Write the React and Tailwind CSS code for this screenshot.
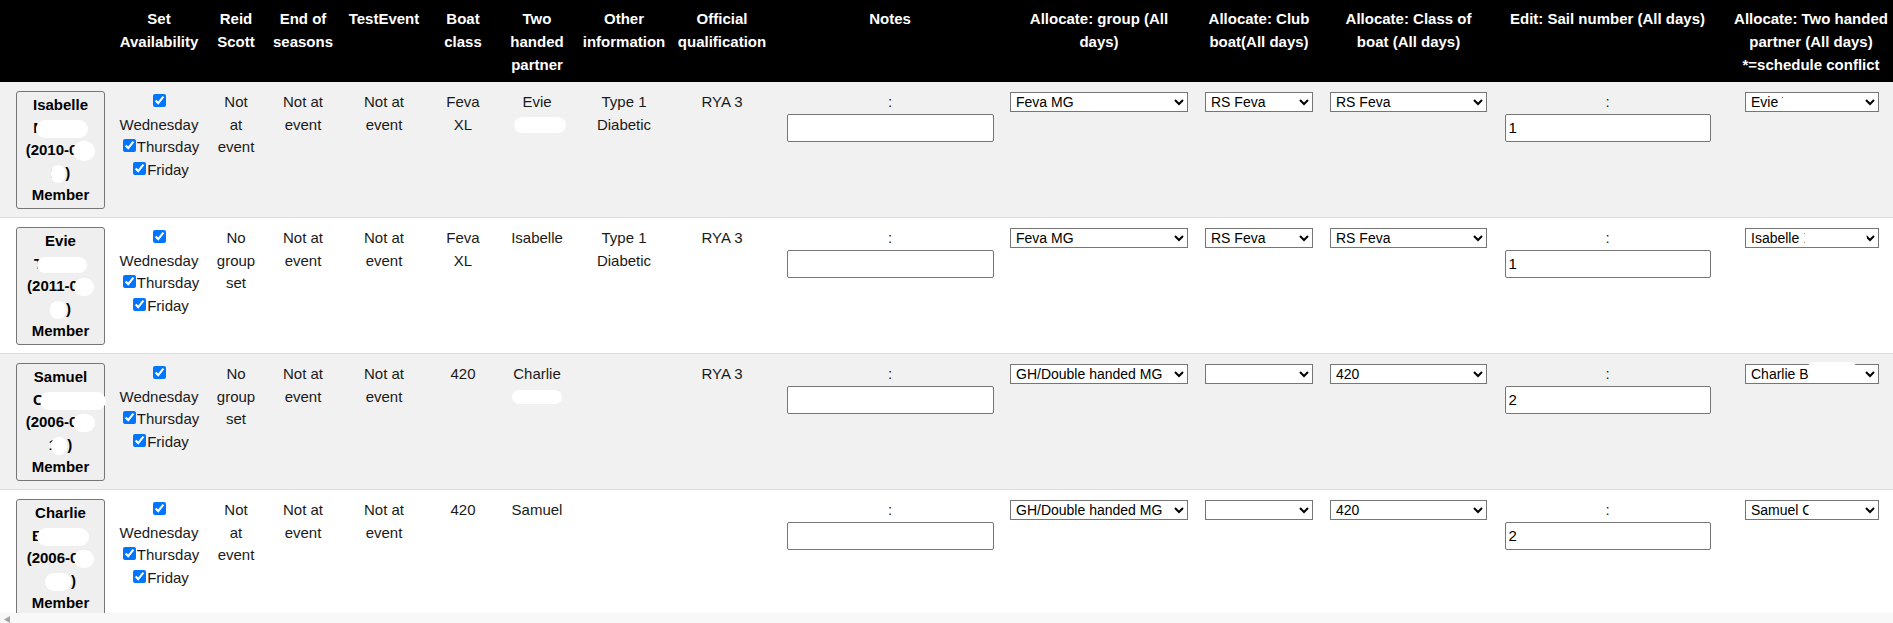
import React from "react";

const Blob = ({ className = "" }) => (
  <span className={`inline-block bg-white rounded-full align-middle ${className}`} />
);

const rows = [
  {
    name: [
      "Isabelle",
      <><span>M</span><Blob className="w-[52px] h-[18px] -ml-[10px]" /></>,
      <><span>(2010-0</span><Blob className="w-[22px] h-[20px] -ml-[4px]" /></>,
      <><span>2</span><Blob className="w-[14px] h-[18px] -ml-[8px]" /><span>)</span></>,
      "Member",
    ],
    reid: ["Not", "at", "event"],
    boat: ["Feva", "XL"],
    partner: "Evie",
    partnerBlob: "w-[52px] h-[16px] ml-[6px]",
    other: ["Type 1", "Diabetic"],
    qual: "RYA 3",
    group: "Feva MG",
    club: "RS Feva",
    cls: "RS Feva",
    sail: "1",
    mate: "Evie T",
    mateBlob: "left-[36px] top-[3px] w-[40px] h-[14px]",
  },
  {
    name: [
      "Evie",
      <><span>T</span><Blob className="w-[50px] h-[16px] -ml-[6px]" /></>,
      <><span>(2011-0</span><Blob className="w-[20px] h-[18px] -ml-[4px]" /></>,
      <><Blob className="w-[16px] h-[18px]" /><span>)</span></>,
      "Member",
    ],
    reid: ["No", "group", "set"],
    boat: ["Feva", "XL"],
    partner: "Isabelle",
    partnerBlob: "w-[30px] h-[10px]",
    other: ["Type 1", "Diabetic"],
    qual: "RYA 3",
    group: "Feva MG",
    club: "RS Feva",
    cls: "RS Feva",
    sail: "1",
    mate: "Isabelle M",
    mateBlob: "left-[58px] top-[3px] w-[64px] h-[14px]",
  },
  {
    name: [
      "Samuel",
      <><span>C</span><Blob className="w-[66px] h-[18px] -ml-[4px] mr-[-18px]" /></>,
      <><span>(2006-0</span><Blob className="w-[22px] h-[18px] -ml-[4px]" /></>,
      <><span>1</span><Blob className="w-[16px] h-[18px] -ml-[6px]" /><span>)</span></>,
      "Member",
    ],
    reid: ["No", "group", "set"],
    boat: ["420"],
    partner: "Charlie",
    partnerBlob: "w-[50px] h-[14px]",
    other: [],
    qual: "RYA 3",
    group: "GH/Double handed MG",
    club: "",
    cls: "420",
    sail: "2",
    mate: "Charlie B",
    mateBlob: "left-[62px] top-[-2px] w-[50px] h-[16px]",
  },
  {
    name: [
      "Charlie",
      <><span>B</span><Blob className="w-[52px] h-[18px] -ml-[6px]" /></>,
      <><span>(2006-0</span><Blob className="w-[20px] h-[18px] -ml-[4px]" /></>,
      <><Blob className="w-[26px] h-[18px]" /><span>)</span></>,
      "Member",
    ],
    reid: ["Not", "at", "event"],
    boat: ["420"],
    partner: "Samuel",
    partnerBlob: "w-[30px] h-[10px]",
    other: [],
    qual: "",
    group: "GH/Double handed MG",
    club: "",
    cls: "420",
    sail: "2",
    mate: "Samuel C",
    mateBlob: "left-[62px] top-[3px] w-[36px] h-[14px]",
  },
];

const Lines = ({ items }) => items.map((t, i) => <div key={i}>{t}</div>);

const Check = () => (
  <input type="checkbox" defaultChecked className="w-[13px] h-[13px] ml-[4px] mr-[1px] align-baseline" />
);

const Select = ({ value, width }) => (
  <select
    defaultValue={value}
    className={`block mx-auto mt-[1px] h-[20px] ${width} border border-[#767676] bg-white text-[14px] leading-[18px] text-black pl-[1px]`}
  >
    <option value={value}>{value}</option>
  </select>
);

const TextInput = ({ value, width }) => (
  <input
    type="text"
    defaultValue={value}
    className={`block mx-auto ${width} h-[28px] border border-[#767676] rounded-[2px] bg-white text-[15px] text-black pl-[3px]`}
  />
);

const heads = [
  [],
  ["Set", "Availability"],
  ["Reid", "Scott"],
  ["End of", "seasons"],
  ["TestEvent"],
  ["Boat", "class"],
  ["Two", "handed", "partner"],
  ["Other", "information"],
  ["Official", "qualification"],
  ["Notes"],
  ["Allocate: group (All", "days)"],
  ["Allocate: Club", "boat(All days)"],
  ["Allocate: Class of", "boat (All days)"],
  ["Edit: Sail number (All days)"],
  ["Allocate: Two handed", "partner (All days)", "*=schedule conflict"],
];

export default function App() {
  const td = "align-top pt-[9px] pb-[8px] px-0 border-b border-[#dddddd] text-center whitespace-nowrap";
  return (
    <div className="w-[1893px] h-[623px] overflow-hidden flex flex-col bg-white font-['Liberation_Sans',Arial,sans-serif] text-[#1a1a1a]">
      <div className="h-[613px] overflow-hidden">
        <table className="table-fixed w-[1902px] border-separate border-spacing-0 text-[15px] leading-[22.5px]">
          <colgroup>
            <col className="w-[118px]" />
            <col className="w-[82px]" />
            <col className="w-[72px]" />
            <col className="w-[62px]" />
            <col className="w-[100px]" />
            <col className="w-[58px]" />
            <col className="w-[90px]" />
            <col className="w-[84px]" />
            <col className="w-[112px]" />
            <col className="w-[224px]" />
            <col className="w-[194px]" />
            <col className="w-[126px]" />
            <col className="w-[173px]" />
            <col className="w-[225px]" />
            <col className="w-[182px]" />
          </colgroup>
          <thead>
            <tr>
              {heads.map((h, i) => (
                <th
                  key={i}
                  className="bg-black text-white font-bold text-[15px] leading-[23px] align-top pt-[6.5px] pb-[6.5px] px-0 text-center whitespace-nowrap"
                >
                  <Lines items={h} />
                </th>
              ))}
            </tr>
          </thead>
          <tbody>
            {rows.map((r, i) => (
              <tr key={i} className={i % 2 === 0 ? "bg-[#f1f1f1]" : "bg-white"}>
                <td className={`${td} text-left pl-[16px]`}>
                  <button className="w-[89px] h-[118px] bg-[#efefef] border border-[#767676] rounded-[3px] font-bold text-[15px] leading-[22.5px] text-black flex flex-col items-center justify-start pt-[2px] overflow-visible">
                    {r.name.map((l, k) => (
                      <div key={k} className="whitespace-nowrap h-[22.5px]">{l}</div>
                    ))}
                  </button>
                </td>
                <td className={td}>
                  <div><input type="checkbox" defaultChecked className="w-[13px] h-[13px] align-baseline" /></div>
                  <div>Wednesday</div>
                  <div><Check />Thursday</div>
                  <div><Check />Friday</div>
                </td>
                <td className={td}><Lines items={r.reid} /></td>
                <td className={td}><Lines items={["Not at", "event"]} /></td>
                <td className={td}><Lines items={["Not at", "event"]} /></td>
                <td className={td}><Lines items={r.boat} /></td>
                <td className={td}>
                  <div>{r.partner}</div>
                  <div className="h-[22.5px] flex items-center justify-center">
                    <Blob className={r.partnerBlob} />
                  </div>
                </td>
                <td className={td}><Lines items={r.other} /></td>
                <td className={td}>{r.qual}</td>
                <td className={td}>
                  <div>:</div>
                  <TextInput value="" width="w-[207px]" />
                </td>
                <td className={td}><Select value={r.group} width="w-[178px]" /></td>
                <td className={td}><Select value={r.club} width="w-[108px]" /></td>
                <td className={td}><Select value={r.cls} width="w-[157px]" /></td>
                <td className={td}>
                  <div>:</div>
                  <TextInput value={r.sail} width="w-[206px]" />
                </td>
                <td className={`${td} text-left pl-[25px]`}>
                  <div className="relative w-[134px]">
                    <Select value={r.mate} width="w-[134px]" />
                    <span className={`absolute bg-white rounded-full ${r.mateBlob}`} />
                  </div>
                </td>
              </tr>
            ))}
          </tbody>
        </table>
      </div>
      <div className="h-[10px] bg-[#f8f8f8] flex items-start">
        <svg width="6" height="7" viewBox="0 0 6 7" className="ml-[4px] mt-[3px]">
          <polygon points="6,0 6,7 0,3.5" fill="#a3a3a3" />
        </svg>
      </div>
    </div>
  );
}
